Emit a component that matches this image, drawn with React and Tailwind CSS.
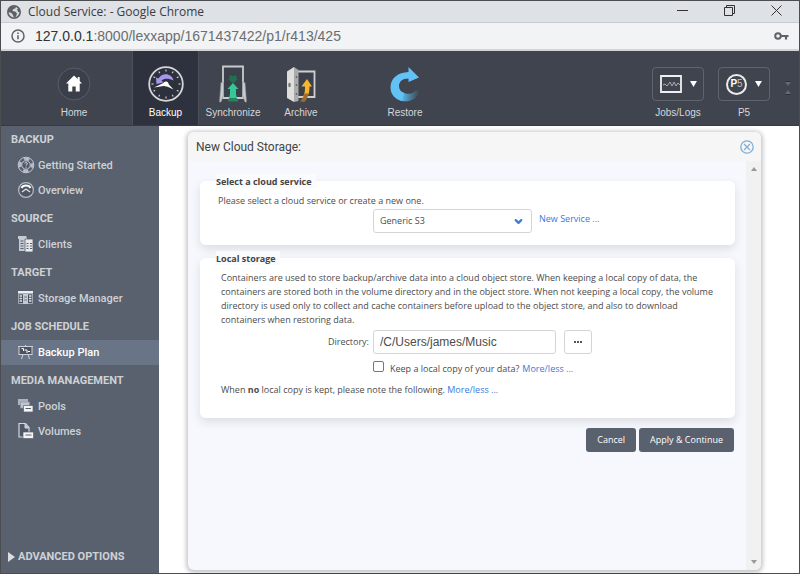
import { ChevronDown } from "lucide-react";

function GlobeIcon() {
  return (
    <svg width="14" height="14" viewBox="0 0 14 14" aria-hidden="true">
      <circle cx="7" cy="7" r="6.2" fill="#d5d8dc" stroke="#5c5f63" strokeWidth="1.6" />
      <path d="M1 5.5 5 1l4 .2-.5 2L6 4.200 5.500 6l3 .8 1.500 1.700-1 3L7 13 6 10 4.500 8 1 7z" fill="#5c5f63" />
      <path d="m10 4 2.500-.5.5 4-2-.7z" fill="#5c5f63" />
    </svg>
  );
}

function InfoIcon() {
  return (
    <svg width="14" height="14" viewBox="0 0 14 14" fill="none" aria-hidden="true">
      <circle cx="7" cy="7" r="6" stroke="#5f6368" strokeWidth="1.500" />
      <path d="M7 6.200v4M7 3.500v1.500" stroke="#5f6368" strokeWidth="1.600" />
    </svg>
  );
}

function KeyIcon() {
  return (
    <svg width="15" height="10" viewBox="0 0 15 10" fill="none" aria-hidden="true">
      <circle cx="4" cy="5" r="2.800" stroke="#5f6368" strokeWidth="2" />
      <path d="M6.500 5H14.500M12 5v3.500" stroke="#5f6368" strokeWidth="2.200" />
    </svg>
  );
}

function HomeIcon() {
  return (
    <svg width="36" height="36" viewBox="0 0 36 36" aria-hidden="true">
      <circle cx="18" cy="18" r="16" fill="#3a3f49" stroke="#5a5e68" />
      <path d="M18 9.500 10 17.500h2.300V25.500h4v-5h3.400v5h4v-8H26l-2.300-2.500v-4h-2v2z" fill="#fff" />
    </svg>
  );
}

function BackupIcon() {
  const ticks = [0, 30, 60, 90, 120, 150, 180, 210, 240, 270, 300, 330];
  return (
    <svg width="36" height="36" viewBox="0 0 36 36" aria-hidden="true">
      <circle cx="18" cy="18" r="16.800" fill="#2c313c" stroke="#d6d6d8" strokeWidth="1.800" />
      {ticks.map((angle) => (
        <path key={angle} d="M18 3.500v2" stroke="#c9cace" strokeWidth="1.200" transform={`rotate(${angle} 18 18)`} />
      ))}
      <path d="M8 11.500 8.500 18 15.500 16.500 13.500 14.500C16 12 21 12 25.500 14.500 24 7 14 6 10.500 12.500z" fill="#a896ea" />
      <path d="M17 16.300 6 21.500l11-1.800z" fill="#fff" />
      <path d="m19 16.500 6.500 7-7.500-3.500z" fill="#fff" />
      <circle cx="18" cy="18" r="2.500" fill="#fff" />
    </svg>
  );
}

function SynchronizeIcon() {
  return (
    <svg width="36" height="38" viewBox="0 0 36 38" aria-hidden="true">
      <path d="M8 1.500h20V33H8z" fill="#3b404a" stroke="#c9cacc" strokeWidth="1.800" />
      <path d="M6 17.500h2.500V30l-2.500 7H4.500zM27.500 17.500H30L31.500 37H30l-2.500-7z" fill="#c9cacc" stroke="#8c8f95" strokeWidth=".6" />
      <path d="M14.500 10.500h2l1.500 1 1.500-1h2V14H23l-5 4.500-5-4.500h1.500z" fill="#21704f" />
      <path d="m18 18-5.500 6h2.500V29l-1.500 7h9l-1.500-7v-5h2.500z" fill="#35c795" />
      <path d="M14 33h8l.8 3.500h-9.600z" fill="#278362" />
    </svg>
  );
}

function ArchiveIcon() {
  return (
    <svg width="36" height="38" viewBox="0 0 36 38" aria-hidden="true">
      <path d="M14 6.500h17.500V32H14z" fill="#3b404a" stroke="#d0d0d0" strokeWidth="1.800" />
      <path d="M4 6.500 11 2v35l-7-4z" fill="#dededc" />
      <path d="m11 2 4.500 3v31L11 37z" fill="#aaabab" />
      <ellipse cx="6.500" cy="20" rx="1.300" ry="2.200" fill="#77797c" />
      <path d="M13.500 11v2M13.500 19v2M13.500 28v2" stroke="#686a6e" strokeWidth="1.400" />
      <path d="m24 14-5.500 7.500H22c0 6-.5 9-3.500 11.500l5.500-.5C26 29 26.500 26 26.500 21.500H29z" fill="#f7b52b" />
      <path d="M21.500 28.500c-.6 3-2 5.500-4.500 8l4.500.5c2-2 3.300-5 4-8.500z" fill="#9c6e2d" />
    </svg>
  );
}

function RestoreIcon() {
  return (
    <svg width="36" height="38" viewBox="0 0 36 38" aria-hidden="true">
      <defs>
        <linearGradient id="restoreFade" x1="14" y1="28" x2="32" y2="30" gradientUnits="userSpaceOnUse">
          <stop offset="0" stopColor="#62c2f6" />
          <stop offset="1" stopColor="#55b9f0" stopOpacity="0" />
        </linearGradient>
      </defs>
      <path d="M21.500 2 32 12.500 21.500 17v-3.500C15 13.500 12 17 12 21 12 24.500 14 27 17 28L15 36C8 34.500 3.500 29 3.500 22.500 3.500 13 11 7.500 21.500 7z" fill="#62c2f6" />
      <path d="M14.500 26.500C19 30 25 29.500 29 25.500l4 1.500C29 35 21 38 13.500 35.500z" fill="url(#restoreFade)" />
    </svg>
  );
}

function JobsIcon() {
  return (
    <svg width="22" height="20" viewBox="0 0 22 20" fill="none" aria-hidden="true">
      <path d="M1 2h20v16H1z" stroke="#f0f0f0" strokeWidth="1.800" />
      <path d="m3 11 2-1 2 2 3-4 2 4 2-4 2 4 2-3 2 2" stroke="#a9acb1" />
    </svg>
  );
}

function P5Icon() {
  return (
    <span className="grid size-[21px] place-items-center rounded-full border-2 border-[#ececec] text-[10px] leading-none text-white">
      <span>
        <b>P</b>
        <span className="text-[#bfc1c5]">5</span>
      </span>
    </span>
  );
}

function GettingStartedIcon() {
  return (
    <svg width="18" height="18" viewBox="0 0 18 18" fill="none" aria-hidden="true">
      <circle cx="9" cy="9" r="7.800" stroke="#c3c8d0" />
      <circle cx="9" cy="9" r="6" stroke="#b7bdc8" strokeWidth="2.800" strokeDasharray="5.212 4.212" strokeDashoffset="2.606" />
      <circle cx="9" cy="9" r="4.200" fill="#4f5766" stroke="#c3c8d0" />
      <path d="M7.800 7.600c0-1.400 2.500-1.400 2.500.1 0 .9-1.200.9-1.200 2M9.100 10.700v1" stroke="#dfe2e7" />
    </svg>
  );
}

function OverviewIcon() {
  return (
    <svg width="18" height="18" viewBox="0 0 18 18" fill="none" aria-hidden="true">
      <circle cx="9" cy="9" r="7.400" fill="#4d5564" stroke="#b9bec6" strokeWidth="1.200" />
      <path d="M4.500 7C6 3.500 12 3.500 13.500 7" stroke="#fff" strokeWidth="2" />
      <path d="m5 11 4-3 4 3" stroke="#dfe2e7" strokeWidth="1.400" />
    </svg>
  );
}

function ClientsIcon() {
  return (
    <svg width="18" height="18" viewBox="0 0 18 18" aria-hidden="true">
      <path d="M1 1h8l1 2v13H2V4H1z" fill="#c6cbd3" />
      <path d="M8 4h8v13H8z" fill="#e7e9ec" stroke="#59616f" strokeWidth=".8" />
      <path d="M3.500 6h3M3.500 8.500h3M3.500 11h3M3.500 13.500h3M9.500 8.500h2M13 8.500h2M9.500 11h2M13 11h2M9.500 13.500h2M13 13.500h2" stroke="#59616f" strokeWidth="1.200" />
    </svg>
  );
}

function StorageIcon() {
  return (
    <svg width="18" height="18" viewBox="0 0 18 18" aria-hidden="true">
      <path d="M1 2h15v2.500H1z" fill="#eceef0" />
      <path d="M1.500 5h14v9.500h-14z" fill="#4a5261" stroke="#b5bac3" strokeWidth=".8" />
      <path d="M6 5h5v10H6z" fill="#c3cad5" />
      <path d="M2.500 7h2.500M2.500 9.500h2.500M2.500 12h2.500M12 7h2.500M12 9.500h2.500M12 12h2.500" stroke="#dfe2e7" strokeWidth="1.300" />
      <path d="M7 8h3M7 11h3" stroke="#6d7a91" />
    </svg>
  );
}

function PlanIcon() {
  return (
    <svg width="18" height="18" viewBox="0 0 18 18" fill="none" aria-hidden="true">
      <path d="M2 3.500h13v8H2z" fill="#4b5363" stroke="#cdd2d9" />
      <path d="M1 3.500h15M8.500 2v1.500M6 11.500 4.500 16M11 11.500l1.500 4.500M1.500 11.500h14" stroke="#cdd2d9" />
      <path d="M4.500 5.500h2v2.500M7.500 7h2.500v3M11 8.500h2" stroke="#fff" />
    </svg>
  );
}

function PoolsIcon() {
  return (
    <svg width="18" height="18" viewBox="0 0 18 18" aria-hidden="true">
      <path d="M1 2h10v6H1z" fill="#aeb4be" />
      <path d="M3.500 5h9v6h-9z" fill="#c1c6ce" stroke="#8b929e" strokeWidth=".7" />
      <path d="M6.500 8.500H16V15H6.500z" fill="#f3f4f5" stroke="#59616f" strokeWidth=".7" />
      <path d="M8.500 11.500h5.500" stroke="#59616f" />
    </svg>
  );
}

function VolumesIcon() {
  return (
    <svg width="18" height="18" viewBox="0 0 18 18" aria-hidden="true">
      <path d="M2 1.500h6.500L12 5.500V15H2z" fill="#4f5766" stroke="#d3d7dc" strokeWidth="1.200" />
      <path d="M8 1.500v4.500h4" fill="#c3c8d0" stroke="#d3d7dc" />
      <path d="M6 10h10.500v6.500H6z" fill="#f3f4f5" stroke="#59616f" strokeWidth=".7" />
      <path d="M8.500 13h6" stroke="#59616f" />
    </svg>
  );
}

const tools = [
  { label: "Home", icon: HomeIcon, box: "w-[131px] pl-[15px]" },
  { label: "Backup", icon: BackupIcon, box: "w-[67px] bg-[#2d323e] border-x border-[#4a4f59]", active: true },
  { label: "Synchronize", icon: SynchronizeIcon, box: "w-[68px]" },
  { label: "Archive", icon: ArchiveIcon, box: "w-[68px]" },
  { label: "Restore", icon: RestoreIcon, box: "w-[68px] ml-9" },
];

const menu = [
  {
    title: "BACKUP",
    items: [
      { label: "Getting Started", icon: GettingStartedIcon },
      { label: "Overview", icon: OverviewIcon },
    ],
  },
  { title: "SOURCE", items: [{ label: "Clients", icon: ClientsIcon }] },
  { title: "TARGET", items: [{ label: "Storage Manager", icon: StorageIcon }] },
  { title: "JOB SCHEDULE", items: [{ label: "Backup Plan", icon: PlanIcon, active: true }] },
  {
    title: "MEDIA MANAGEMENT",
    items: [
      { label: "Pools", icon: PoolsIcon },
      { label: "Volumes", icon: VolumesIcon },
    ],
  },
];

function WindowBars() {
  return (
    <>
      <div className="flex h-[22px] items-center border-b border-[#c9ccd0] bg-[#dee1e6] pl-[6px] pr-[17px]">
        <GlobeIcon />
        <h1 className="ml-[7px] flex-1 text-[12px] leading-4 text-[#3a3c3f]">Cloud Service: - Google Chrome</h1>
        <div className="flex items-center gap-9 pb-[2px]">
          <button aria-label="Minimize">
            <svg width="11" height="11" viewBox="0 0 11 11" stroke="#333" fill="none"><path d="M0 5.500h11" /></svg>
          </button>
          <button aria-label="Restore down">
            <svg width="11" height="11" viewBox="0 0 11 11" stroke="#333" fill="none"><path d="M.5 2.500h8v8h-8zM2.500 2.500v-2h8v8h-2" /></svg>
          </button>
          <button aria-label="Close window">
            <svg width="11" height="11" viewBox="0 0 11 11" stroke="#333" fill="none"><path d="m.5.5 10 10M10.500.5l-10 10" /></svg>
          </button>
        </div>
      </div>
      <div className="flex h-[28px] items-center border-b-2 border-[#d3d5d8] bg-[#f1f3f4] pl-[10px] pr-[10px]">
        <InfoIcon />
        <p className="ml-[10px] flex-1 font-['Liberation_Sans',Arial,sans-serif] text-[14px] leading-4 text-[#6a6e73]">
          <span className="text-[#303236]">127.0.0.1</span>:8000/lexxapp/1671437422/p1/r413/425
        </p>
        <KeyIcon />
      </div>
    </>
  );
}

function MenuButton({ label, children }) {
  return (
    <div className="flex flex-col items-center gap-1">
      <button aria-label={label} className="flex h-[34px] w-[52px] items-center justify-center gap-2 rounded border border-[#60646d]">
        {children}
        <svg width="7" height="6" viewBox="0 0 8 7" aria-hidden="true"><path d="M0 0h8L4 7z" fill="#fff" /></svg>
      </button>
      <span className="text-[10px] leading-4 text-[#d6d7d9]">{label}</span>
    </div>
  );
}

function Toolbar() {
  return (
    <header className="flex h-[75px] border-b border-[#353a45] bg-[#3f444f] font-['Liberation_Sans',Arial,sans-serif]">
      {tools.map(({ label, icon: Icon, box, active }) => (
        <button key={label} className={`flex flex-col items-center justify-end gap-[2px] pb-1 ${box}`}>
          <span className="flex h-[38px] items-center"><Icon /></span>
          <span className={`text-[10px] leading-4 ${active ? "text-white" : "text-[#d6d7d9]"}`}>{label}</span>
        </button>
      ))}
      <div className="ml-auto flex gap-[14px] pr-[7px] pt-4">
        <MenuButton label="Jobs/Logs"><JobsIcon /></MenuButton>
        <MenuButton label="P5"><P5Icon /></MenuButton>
        <svg className="mt-[13px]" width="8" height="16" viewBox="0 0 8 16" aria-hidden="true">
          <path d="M1 2h6L4 6zM1 14h6L4 10z" fill="#646871" />
          <path d="M1 1.500h6M1 14.500h6" stroke="#2e333d" />
        </svg>
      </div>
    </header>
  );
}

function Sidebar() {
  return (
    <nav className="flex w-[158px] shrink-0 flex-col bg-[#59616f] font-[Roboto,sans-serif] text-[11px] font-medium text-[#ced1d5]">
      <div className="flex flex-col gap-[2px]">
        {menu.map((group) => (
          <section key={group.title}>
            <h2 className="flex h-[27px] items-center pl-[10px] pt-[2px] font-bold">{group.title}</h2>
            {group.items.map(({ label, icon: Icon, active }) => (
              <a key={label} href="#" className={`flex h-[25px] items-center gap-[3px] pl-4 ${active ? "bg-[#697486] text-white" : ""}`}>
                <span className="pb-[2px]"><Icon /></span>
                <span className="pt-[2px]">{label}</span>
              </a>
            ))}
          </section>
        ))}
      </div>
      <button className="mt-auto flex items-center gap-[3px] pb-2 pl-[7px] font-bold leading-4">
        <svg width="7" height="10" viewBox="0 0 7 10" aria-hidden="true"><path d="M0 0v10l7-5z" fill="#dcdde0" /></svg>
        ADVANCED OPTIONS
      </button>
    </nav>
  );
}

function Card({ title, children }) {
  return (
    <fieldset className="rounded-md bg-white pl-4 shadow-[0_4px_10px_rgba(60,65,80,0.14)]">
      <legend className="h-[14px] bg-[#fafbfd] pr-1 text-[9px] font-bold leading-4 text-[#444]">{title}</legend>
      {children}
    </fieldset>
  );
}

function Dialog() {
  return (
    <section className="flex flex-1 flex-col overflow-hidden rounded-md bg-[#f7f8fd] shadow-[0_1px_4px_2px_rgba(0,0,0,0.22)]">
      <div className="flex h-[29px] items-center justify-between bg-[#f5f6f5] pl-2 pr-[7px]">
        <h2 className="font-[Roboto,sans-serif] text-[12px] text-[#444]">New Cloud Storage:</h2>
        <button aria-label="Close">
          <svg width="14" height="14" viewBox="0 0 14 14" fill="none" stroke="#7eaed8" aria-hidden="true">
            <circle cx="7" cy="7" r="6.200" strokeWidth="1.300" />
            <path d="m4 4 6 6M10 4l-6 6" strokeWidth="1.200" />
          </svg>
        </button>
      </div>
      <div className="flex flex-1">
        <form className="flex-1 pl-3 pr-[11px] pt-[13px] text-[9px] leading-[14px] text-[#4c4c4c]">
          <Card title="Select a cloud service">
            <div className="h-[57px] pl-[2px] pt-[6px]">
              <label htmlFor="service" className="block">Please select a cloud service or create a new one.</label>
              <div className="ml-[155px] mt-px flex gap-[7px]">
                <span className="grid w-[159px]">
                  <select id="service" className="col-start-1 row-start-1 h-[24px] appearance-none rounded-[3px] border border-[#d3d5d8] bg-white pl-[6px] text-[9px]">
                    <option>Generic S3</option>
                  </select>
                  <ChevronDown size={11} strokeWidth={5} className="pointer-events-none col-start-1 row-start-1 mr-2 self-center justify-self-end text-[#3d7bdc]" />
                </span>
                <a href="#" className="pt-[3px] text-[#3d78dc]">New Service ...</a>
              </div>
            </div>
          </Card>
          <div className="mt-[6px]">
            <Card title="Local storage">
              <div className="h-[153px] pl-[5px] pr-3 pt-[6px]">
                <p>
                  Containers are used to store backup/archive data into a cloud object store. When keeping a local copy of data, the containers are stored both in the volume directory and in the object store. When not keeping a local copy, the volume directory is used only to collect and cache containers before upload to the object store, and also to download containers when restoring data.
                </p>
                <div className="mt-[3px] flex items-center">
                  <label htmlFor="directory" className="w-[152px] pr-1 text-right">Directory:</label>
                  <input id="directory" defaultValue="/C/Users/james/Music" className="h-[24px] w-[183px] rounded-[3px] border border-[#d3d5d8] bg-white px-[6px] font-['Liberation_Sans',Arial,sans-serif] text-[12px]" />
                  <button type="button" aria-label="Browse" className="ml-2 grid h-[24px] w-[28px] place-items-center rounded-[3px] border border-[#d3d5d8]">
                    <svg width="8" height="2" viewBox="0 0 8 2" aria-hidden="true"><path d="M0 0h2v2H0zM3 0h2v2H3zM6 0h2v2H6z" fill="#555" /></svg>
                  </button>
                </div>
                <div className="ml-[152px] mt-[7px] flex">
                  <input id="keep" type="checkbox" className="mr-[6px] size-[11px] appearance-none rounded-[2px] border border-[#777] bg-white" />
                  <label htmlFor="keep" className="pt-px">Keep a local copy of your data?</label>
                  <a href="#" className="ml-[3px] pt-px text-[#3d78dc]">More/less ...</a>
                </div>
                <p className="mt-[7px]">
                  When <b>no</b> local copy is kept, please note the following. <a href="#" className="text-[#3d78dc]">More/less ...</a>
                </p>
              </div>
            </Card>
          </div>
          <div className="mt-[10px] flex justify-end gap-[3px] pr-px text-[9px] font-medium text-white">
            <button type="button" className="h-[24px] rounded-[3px] bg-[#59616f] px-[11px]">Cancel</button>
            <button type="submit" className="h-[24px] rounded-[3px] bg-[#59616f] px-[11px]">Apply &amp; Continue</button>
          </div>
        </form>
        <div className="flex w-[15px] flex-col items-center justify-between bg-[#f1f1f1] py-[6px]" aria-hidden="true">
          <svg width="6" height="4" viewBox="0 0 6 4"><path d="M0 4h6L3 0z" fill="#999" /></svg>
          <svg width="6" height="4" viewBox="0 0 6 4"><path d="M0 0h6L3 4z" fill="#999" /></svg>
        </div>
      </div>
    </section>
  );
}

export default function App() {
  return (
    <div className="flex min-h-screen flex-col border border-[#4b4d50] bg-white font-['Open_Sans','Noto_Sans',sans-serif]">
      <WindowBars />
      <Toolbar />
      <div className="flex flex-1">
        <Sidebar />
        <main className="flex flex-1 pb-[3px] pl-[29px] pr-[38px] pt-[6px]">
          <Dialog />
        </main>
      </div>
    </div>
  );
}
